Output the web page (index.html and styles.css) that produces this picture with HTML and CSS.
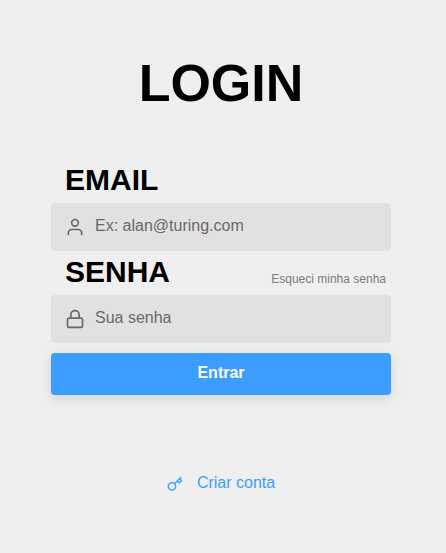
FILE: index.html
```html
<!DOCTYPE html>
<html lang="pt-BR">
<head>
<meta charset="utf-8">
<meta name="viewport" content="width=device-width, initial-scale=1">
<title>Login</title>
<link rel="stylesheet" href="styles.css">
</head>
<body>
<main class="login">
  <h1 class="title">LOGIN</h1>
  <form class="form">
    <div class="field-head">
      <label class="field-label" for="email">EMAIL</label>
    </div>
    <div class="field">
      <svg class="icon" viewBox="0 0 24 24" aria-hidden="true"><path d="M20 21v-2a4 4 0 0 0-4-4H8a4 4 0 0 0-4 4v2"/><circle cx="12" cy="7" r="4"/></svg>
      <input class="input" id="email" type="email" placeholder="Ex: alan@turing.com">
    </div>
    <div class="field-head">
      <label class="field-label" for="password">SENHA</label>
      <a class="forgot" href="#">Esqueci minha senha</a>
    </div>
    <div class="field">
      <svg class="icon" viewBox="0 0 24 24" aria-hidden="true"><rect x="3" y="11" width="18" height="11" rx="2"/><path d="M7 11V7a5 5 0 0 1 10 0v4"/></svg>
      <input class="input" id="password" type="password" placeholder="Sua senha">
    </div>
    <button class="submit" type="submit">Entrar</button>
  </form>
  <a class="signup" href="#">
    <svg class="signup-icon" viewBox="0 0 24 24" aria-hidden="true"><path d="M21 2l-2 2m-7.61 7.61a5.5 5.5 0 1 1-7.778 7.778 5.5 5.5 0 0 1 7.777-7.777zm0 0L15.5 7.5m0 0l3 3L22 7l-3-3m-3.5 3.5L19 4"/></svg>
    Criar conta
  </a>
</main>
</body>
</html>
```
FILE: styles.css
```css
* {
  box-sizing: border-box;
}

body {
  margin: 0;
  background: #efefef;
  color: #000;
  font-family: "Liberation Sans", Arial, sans-serif;
  font-size: 16px;
}

.login {
  display: flex;
  flex-direction: column;
  align-items: center;
  max-width: 442px;
  padding: 53px 51px 24px;
}

.title {
  margin: 0 0 46px;
  font-size: 52px;
  line-height: 60px;
}

.form {
  width: 100%;
}

.field-head {
  display: flex;
  align-items: flex-start;
  justify-content: space-between;
  height: 44px;
  padding: 0 5px 0 14px;
}

.field-label {
  font-size: 30px;
  font-weight: bold;
  line-height: 42px;
}

.forgot {
  padding-top: 21px;
  color: #7b7b80;
  font-size: 12px;
  text-decoration: none;
}

.field {
  display: flex;
  align-items: center;
  gap: 10px;
  height: 48px;
  padding: 0 14px;
  border-radius: 4px;
  background: #e1e1e1;
}

.icon,
.signup-icon {
  flex: none;
  fill: none;
  stroke: currentColor;
  stroke-width: 2;
  stroke-linecap: round;
  stroke-linejoin: round;
}

.icon {
  width: 20px;
  height: 20px;
  color: #6c6863;
}

.input {
  flex: 1;
  min-width: 0;
  padding: 0 0 2px;
  border: 0;
  outline: 0;
  background: transparent;
  color: #333;
  font: inherit;
}

.input::placeholder {
  color: #6c6863;
}

.submit {
  width: 100%;
  height: 42px;
  margin-top: 10px;
  padding: 0 0 2px;
  border: 0;
  border-radius: 4px;
  background: #3b9dff;
  box-shadow: 0 3px 12px rgba(0, 0, 0, 0.12);
  color: #fff;
  font: inherit;
  font-weight: bold;
}

.signup {
  display: flex;
  align-items: flex-end;
  gap: 14px;
  margin-top: 79px;
  color: #3b9dff;
  line-height: 18px;
  text-decoration: none;
}

.signup-icon {
  width: 16px;
  height: 16px;
}
```
